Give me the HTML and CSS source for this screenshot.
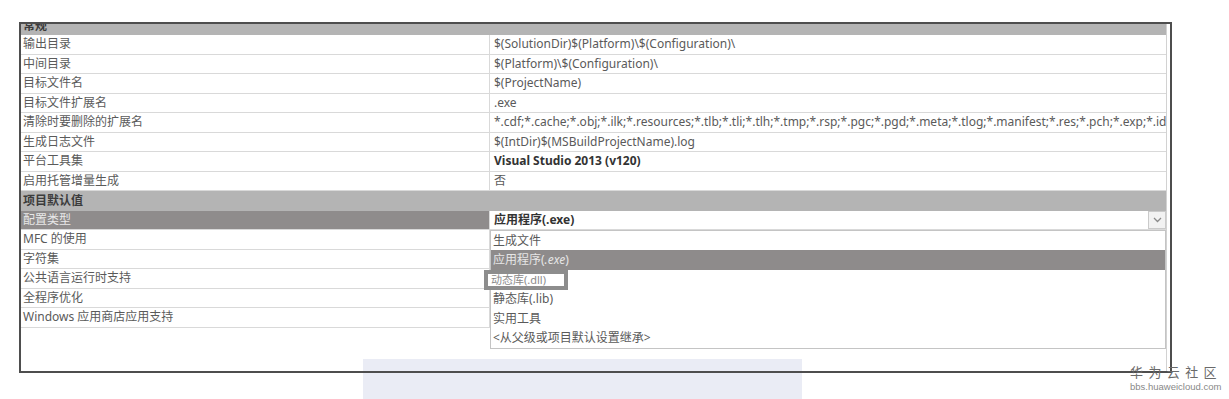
FILE: index.html
```html
<!DOCTYPE html>
<html lang="zh-CN">
<head>
    <meta charset="UTF-8">
    <meta name="viewport" content="width=device-width, initial-scale=1.0">
    <title>配置属性 - 常规</title>
    <link rel="stylesheet" href="styles.css">
</head>
<body>
    <div class="haze"></div>

    <div class="frame">
        <div class="panel">
            <div class="section-head clipped"><span>常规</span></div>
            <div class="row"><div class="key">输出目录</div><div class="val">$(SolutionDir)$(Platform)\$(Configuration)\</div></div>
            <div class="row"><div class="key">中间目录</div><div class="val">$(Platform)\$(Configuration)\</div></div>
            <div class="row"><div class="key">目标文件名</div><div class="val">$(ProjectName)</div></div>
            <div class="row"><div class="key">目标文件扩展名</div><div class="val">.exe</div></div>
            <div class="row"><div class="key">清除时要删除的扩展名</div><div class="val">*.cdf;*.cache;*.obj;*.ilk;*.resources;*.tlb;*.tli;*.tlh;*.tmp;*.rsp;*.pgc;*.pgd;*.meta;*.tlog;*.manifest;*.res;*.pch;*.exp;*.idb;*.rep;*.xdc;*.pdb;*_manifest.rc;*.bsc;*.sbr;*.xml</div></div>
            <div class="row"><div class="key">生成日志文件</div><div class="val">$(IntDir)$(MSBuildProjectName).log</div></div>
            <div class="row"><div class="key">平台工具集</div><div class="val bold">Visual Studio 2013 (v120)</div></div>
            <div class="row"><div class="key">启用托管增量生成</div><div class="val">否</div></div>

            <div class="section-head">项目默认值</div>
            <div class="row selected">
                <div class="key">配置类型</div>
                <div class="val combo">
                    <span class="bold">应用程序(.exe)</span>
                    <span class="combo-btn">
                        <svg width="9" height="6" viewBox="0 0 9 6"><path d="M1 1 L4.5 4.5 L8 1" fill="none" stroke="#8a8a8a" stroke-width="1.3"/></svg>
                    </span>
                </div>
            </div>
            <div class="row"><div class="key">MFC 的使用</div><div class="val"></div></div>
            <div class="row"><div class="key">字符集</div><div class="val"></div></div>
            <div class="row"><div class="key">公共语言运行时支持</div><div class="val"></div></div>
            <div class="row"><div class="key">全程序优化</div><div class="val"></div></div>
            <div class="row"><div class="key">Windows 应用商店应用支持</div><div class="val"></div></div>

            <ul class="dropdown">
                <li>生成文件</li>
                <li class="active">应用程序(<i>.exe</i>)</li>
                <li><span class="ghost">动态库(.dll)</span></li>
                <li>静态库(.lib)</li>
                <li>实用工具</li>
                <li>&lt;从父级或项目默认设置继承&gt;</li>
            </ul>
        </div>
    </div>

    <div class="watermark">
        <div class="wm-title">华 为 云 社 区</div>
        <div class="wm-url">bbs.huaweicloud.com</div>
    </div>
</body>
</html>
```

FILE: styles.css
```css
body {
    margin: 0;
    background-color: #fff;
    font-family: "Noto Sans", "Noto Sans CJK SC", sans-serif;
    font-size: 12px;
    color: #5a5a5a;
}
.frame {
    box-sizing: border-box;
    width: 1153px;
    height: 351px;
    margin: 22px 0 0 19px;
    border: 2px solid #4e4e4e;
}
.panel {
    position: relative;
    box-sizing: border-box;
    width: 1146px;
    height: 100%;
    border-right: 1px solid #d2d2d2;
}
.section-head {
    box-sizing: border-box;
    height: 19.5px;
    line-height: 19.5px;
    padding-left: 2px;
    background-color: #b4b4b4;
    color: #3c3c3c;
    font-weight: bold;
}
.clipped {
    height: 11px;
    overflow: hidden;
}
.clipped span {
    display: block;
    margin-top: -8px;
}
.row {
    display: grid;
    grid-template-columns: 469px 1fr;
    box-sizing: border-box;
    height: 19.5px;
    line-height: 18.5px;
    border-bottom: 1px solid #d9d9d9;
    background-color: #fff;
}
.key {
    padding-left: 2px;
    border-right: 1px solid #d9d9d9;
    white-space: nowrap;
    overflow: hidden;
}
.val {
    padding-left: 4px;
    white-space: nowrap;
    overflow: hidden;
}
.bold {
    font-weight: bold;
    color: #333;
}
.selected .key {
    background-color: #8f8c8c;
    color: #e8e8e8;
}
.combo {
    display: flex;
    justify-content: space-between;
    align-items: stretch;
}
.combo-btn {
    box-sizing: border-box;
    width: 18px;
    display: flex;
    align-items: center;
    justify-content: center;
    background-color: #f2f2f2;
    border: 1px solid #cacaca;
}
.dropdown {
    position: absolute;
    left: 469px;
    top: 205.5px;
    box-sizing: border-box;
    width: 676px;
    margin: 0;
    padding: 0;
    list-style: none;
    background-color: #fff;
    border: 1px solid #c4c4c4;
}
.dropdown li {
    height: 19.5px;
    line-height: 19.5px;
    padding-left: 2px;
    white-space: nowrap;
}
.dropdown .active {
    background-color: #8e8b8b;
    color: #e6e6e6;
}
.ghost {
    display: inline-block;
    box-sizing: border-box;
    width: 84px;
    height: 20px;
    line-height: 12px;
    margin-left: -9px;
    padding-left: 3px;
    border: 4px solid #8d8d8d;
    background-color: #fff;
    color: #8a8a8a;
    font-size: 11px;
    vertical-align: top;
    overflow: hidden;
}
.haze {
    position: absolute;
    z-index: -1;
    left: 363px;
    top: 359px;
    width: 439px;
    height: 40px;
    background-color: #eaecf5;
}
.watermark {
    position: absolute;
    left: 1130px;
    top: 366px;
    color: #6a6a6a;
    line-height: 1;
    white-space: nowrap;
}
.wm-title {
    font-size: 13px;
    letter-spacing: 1px;
}
.wm-url {
    margin-top: 3px;
    font-family: "Liberation Sans", sans-serif;
    font-size: 9.5px;
    color: #888;
}
```
